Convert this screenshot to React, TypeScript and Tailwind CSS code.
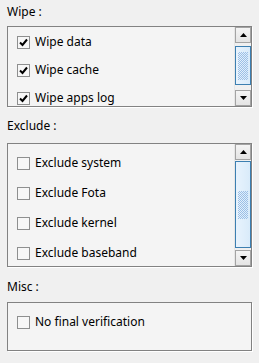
import React from "react";

const font = { fontFamily: '"Noto Sans", "Open Sans", sans-serif' };

const Check = ({ checked }: { checked: boolean }) => (
  <div className="w-[13px] h-[13px] border border-[#8e8f8f] bg-[#f7f7f7] flex items-center justify-center shrink-0">
    {checked && (
      <svg width="9" height="9" viewBox="0 0 9 9">
        <path d="M1 4.5 L3.5 7 L8 1.5" stroke="#000" strokeWidth="2" fill="none" />
      </svg>
    )}
  </div>
);

const Arrow = ({ up }: { up: boolean }) => (
  <svg width="7" height="4" viewBox="0 0 7 4">
    {up ? <path d="M0 4 L3.5 0 L7 4 Z" fill="#000" /> : <path d="M0 0 L7 0 L3.5 4 Z" fill="#000" />}
  </svg>
);

const ScrollBtn = ({ up }: { up: boolean }) => (
  <div className="h-[16px] border border-[#a3a3a3] bg-gradient-to-b from-[#f4f4f4] to-[#e4e4e4] flex items-center justify-center shrink-0">
    <Arrow up={up} />
  </div>
);

// gap above thumb and thumb height, in px
const Scrollbar = ({ gapTop, thumb }: { gapTop: number; thumb: number }) => (
  <div className="w-[17px] h-full flex flex-col bg-[#f0f0f0] border-l border-[#e6e6e6]">
    <ScrollBtn up />
    <div style={{ height: gapTop }} className="shrink-0" />
    <div
      style={{ height: thumb }}
      className="shrink-0 border border-[#3c7fb1] bg-gradient-to-r from-[#e8f3fd] to-[#d9ebfa] flex items-center justify-center"
    >
      <div className="w-[10px] h-[28px] bg-[conic-gradient(#9cbfe6_25%,transparent_0_50%,#9cbfe6_0_75%,transparent_0)] bg-[length:2px_2px]" />
    </div>
    <div className="flex-1" />
    <ScrollBtn up={false} />
  </div>
);

const Row = ({ label, checked, h }: { label: string; checked: boolean; h: string }) => (
  <div className={`flex items-center gap-[5px] pl-[9px] ${h} shrink-0`}>
    <Check checked={checked} />
    <span className="text-[12px] text-[#000] leading-none whitespace-nowrap">{label}</span>
  </div>
);

const Label = ({ text, cls }: { text: string; cls: string }) => (
  <div className={`h-[16px] flex items-center text-[12px] text-black ${cls}`}>{text}</div>
);

export default function App() {
  return (
    <div style={font} className="w-[259px] h-[363px] bg-[#f0f0f0] pl-[7px] pr-[7px] pt-[4px] overflow-hidden">
      <Label text="Wipe :" cls="" />
      <div className="mt-[6px] h-[81px] border border-[#828282] bg-[#f4f4f4] shadow-[1px_1px_0_#ffffff] flex">
        <div className="flex-1 flex flex-col pt-[1px] overflow-hidden">
          <Row label="Wipe data" checked h="h-[28px]" />
          <Row label="Wipe cache" checked h="h-[28px]" />
          <Row label="Wipe apps log" checked h="h-[28px]" />
        </div>
        <Scrollbar gapTop={3} thumb={39} />
      </div>

      <Label text="Exclude :" cls="mt-[11px]" />
      <div className="mt-[9px] h-[124px] border border-[#828282] bg-[#f4f4f4] shadow-[1px_1px_0_#ffffff] flex">
        <div className="flex-1 flex flex-col pt-[4px] overflow-hidden">
          <Row label="Exclude system" checked={false} h="h-[30px]" />
          <Row label="Exclude Fota" checked={false} h="h-[30px]" />
          <Row label="Exclude kernel" checked={false} h="h-[30px]" />
          <Row label="Exclude baseband" checked={false} h="h-[30px]" />
        </div>
        <Scrollbar gapTop={1} thumb={87} />
      </div>

      <Label text="Misc :" cls="mt-[12px]" />
      <div className="mt-[7px] h-[49px] border border-[#828282] bg-[#f4f4f4] shadow-[1px_1px_0_#ffffff] pt-[9px]">
        <Row label="No final verification" checked={false} h="h-[20px]" />
      </div>
    </div>
  );
}
